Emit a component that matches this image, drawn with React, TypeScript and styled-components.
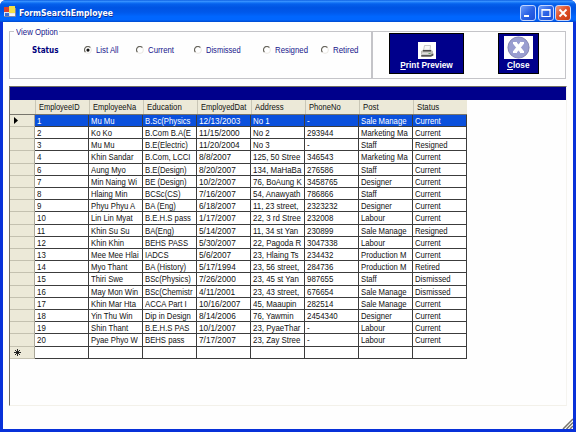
import React from "react";
import styled, { createGlobalStyle } from "styled-components";

const Global = createGlobalStyle`
  * { box-sizing: border-box; }
  body { margin: 0; background: #fff; overflow: hidden; font-family: "Liberation Sans", Arial, sans-serif; }
`;

const Window = styled.div`
  width: 576px;
  height: 432px;
  display: flex;
  flex-direction: column;
  background: #0831d9;
  border-radius: 6px 6px 0 0;
  overflow: hidden;
`;

const TitleBar = styled.header`
  height: 22px;
  flex: none;
  display: flex;
  align-items: center;
  padding: 2px 5px 0 4px;
  gap: 2px;
  background: linear-gradient(#0a5ce0 0, #3a93ff 6%, #2080fa 10%, #0560ec 18%, #0054e3 35%, #0058ea 55%, #0066fe 75%, #0066ff 90%, #0048cc 100%);
`;

const Title = styled.h1`
  margin: 0 auto 0 1px;
  font: bold 9.5px/14px "DejaVu Sans", sans-serif;
  color: #fff;
  white-space: nowrap;
  width: 380px;
  transform: scaleX(0.81);
  transform-origin: left;
  text-shadow: 1px 1px #0a2f9a;
  padding-top: 1px;
`;

const Caption = styled.span<{ $close?: boolean }>`
  width: 16px;
  height: 16px;
  flex: none;
  margin-top: 1px;
  margin-left: ${(p) => (p.$close ? "-1px" : 0)};
  border: 1px solid #c3d6ff;
  border-radius: 3px;
  background: ${(p) => (p.$close ? "linear-gradient(135deg,#f0997c,#e2522b 45%,#c63a12)" : "linear-gradient(135deg,#6d9dfa,#2c63e6 50%,#1c4fd8)")};
  display: flex;
  svg { display: block; }
`;

const Client = styled.main`
  flex: 1;
  margin: 0 3px 3px 3px;
  background: #fefefe;
  padding: 9px 7px 0 6px;
  display: flex;
  flex-direction: column;
  position: relative;
`;

const Tools = styled.section`
  display: flex;
  height: 48px;
`;

const Box = styled.div<{ $w: number }>`
  width: ${(p) => p.$w}px;
  border: 1px solid #c4c4c8;
  position: relative;
`;

const Legend = styled.span`
  position: absolute;
  top: -6px;
  left: 4px;
  width: 45px;
  padding-left: 2px;
  background: #fefefe;
  font-size: 9.4px;
  line-height: 12px;
  color: #16168c;
  white-space: nowrap;
`;

const Squeeze = styled.span<{ $k: number }>`
  display: inline-block;
  transform: scaleX(${(p) => p.$k * 0.957});
  transform-origin: left;
  white-space: pre;
`;

const StatusRow = styled.div`
  height: 14px;
  margin: 11px 0 0 22px;
  display: grid;
  grid-template-columns: 52px 52px 58px 69px 58px 50px;
  align-items: center;
  color: #16168c;
  font-size: 9.4px;
  line-height: 14px;
`;

const Status = styled.strong`
  font: bold 9px/14px "DejaVu Sans", sans-serif;
  color: #00007c;
`;

const Option = styled.label`
  display: flex;
  align-items: center;
  gap: 4px;
  white-space: nowrap;
  svg { flex: none; }
`;

const Actions = styled(Box)`
  display: flex;
  padding: 1px 0 0 16px;
  gap: 34px;
`;

const Action = styled.button<{ $w: number }>`
  width: ${(p) => p.$w}px;
  height: 41px;
  padding: 0;
  border: 1px solid #000;
  background: #00008b;
  color: #fff;
  display: flex;
  flex-direction: column;
  align-items: center;
  justify-content: flex-end;
  font: bold 9px/13px "Liberation Sans", Arial, sans-serif;
  white-space: nowrap;
`;

const ActionText = styled.span<{ $k: number }>`
  height: 13px;
  margin-bottom: 1px;
  transform: scaleX(${(p) => p.$k});
`;

const Grid = styled.section`
  margin-top: 7px;
  height: 320px;
  width: 558px;
  border-left: 1px solid #716f64;
  border-top: 1px solid #716f64;
  border-bottom: 1px solid #f3f1ea;
  border-right: 1px solid #f5f4f0;
`;

const Band = styled.div`
  height: 13px;
  background: #00008b;
`;

const Row = styled.div<{ $h: number }>`
  display: grid;
  grid-template-columns: 25px repeat(8, 54px);
  width: 457px;
  height: ${(p) => p.$h}px;
`;

const HeadRow = styled(Row)`
  background: #ece9d8;
  border-bottom: 1px solid #77756c;
`;

const Head = styled.div`
  border-left: 1px solid #c9c6b6;
  padding-left: 2.5px;
  font-size: 9.4px;
  line-height: 14px;
  color: #111;
  overflow: hidden;
`;

const Stub = styled.div`
  background: #ece9d8;
  border-bottom: 1px solid #c4c1b0;
  border-right: 1px solid #a9a698;
  display: flex;
  align-items: center;
  padding-left: 4px;
`;

const Cell = styled.div<{ $on?: boolean }>`
  border-right: 1px solid #3c3c3c;
  border-bottom: 1px solid #3c3c3c;
  padding-left: 2px;
  font-size: 9.4px;
  line-height: 11px;
  white-space: nowrap;
  background: ${(p) => (p.$on ? "#0a50dc" : "#fff")};
  color: ${(p) => (p.$on ? "#fff" : "#111")};
`;

const Grip = styled.svg`
  position: absolute;
  right: 0;
  bottom: 0;
`;

const heads = ["EmployeeID", "EmployeeNa", "Education", "EmployedDat", "Address", "PhoneNo", "Post", "Status"];
const headScale = [0.83, 0.84, 0.87, 0.84, 0.87, 0.85, 0.87, 0.87];

const rows = `1|Mu Mu|B.Sc(Physics|12/13/2003|No 1|-|Sale Manage|Current
2|Ko Ko|B.Com B.A(E|11/15/2000|No 2|293944|Marketing Ma|Current
3|Mu Mu|B.E(Electric)|11/20/2004|No 3|-|Staff|Resigned
4|Khin Sandar|B.Com, LCCI|8/8/2007|125, 50 Stree|346543|Marketing Ma|Current
6|Aung Myo|B.E(Design)|8/20/2007|134, MaHaBa|276586|Staff|Current
7|Min Naing Wi|BE (Design)|10/2/2007|76, BoAung K|3458765|Designer|Current
8|Hlaing Min|BCSc(CS)|7/16/2007|54, Anawyath|786866|Staff|Current
9|Phyu Phyu A|BA (Eng)|6/18/2007|11, 23 street,|2323232|Designer|Current
10|Lin Lin Myat|B.E.H.S pass|1/17/2007|22, 3 rd Stree|232008|Labour|Current
11|Khin Su Su|BA(Eng)|5/14/2007|11, 34 st Yan|230899|Sale Manage|Resigned
12|Khin Khin|BEHS PASS|5/30/2007|22, Pagoda R|3047338|Labour|Current
13|Mee Mee Hlai|IADCS|5/6/2007|23, Hlaing Ts|234432|Production M|Current
14|Myo Thant|BA (History)|5/17/1994|23, 56 street,|284736|Production M|Retired
15|Thiri Swe|BSc(Physics)|7/26/2000|23, 45 st Yan|987655|Staff|Dismissed
16|May Mon Win|BSc(Chemistr|4/11/2001|23, 43 street,|676654|Sale Manage|Dismissed
17|Khin Mar Hta|ACCA Part I|10/16/2007|45, Maaupin|282514|Sale Manage|Current
18|Yin Thu Win|Dip in Design|8/14/2006|76, Yawmin|2454340|Designer|Current
19|Shin Thant|B.E.H.S PAS|10/1/2007|23, PyaeThar|-|Labour|Current
20|Pyae Phyo W|BEHS pass|7/17/2007|23, Zay Stree|-|Labour|Current
|||||||`.split("\n").map((line) => line.split("|"));
const cellScale = [0.88, 0.86, 0.86, 0.92, 0.88, 0.88, 0.86, 0.86];

const Radio = ({ on }: { on?: boolean }) => (
  <svg width="8" height="8" viewBox="0 0 8 8">
    <circle cx="4" cy="4" r="3.4" fill="#fff" stroke="#e4e2da" strokeWidth=".8" />
    <path d="M1.4 6.2A3.4 3.4 0 0 1 6.4 1.5" fill="none" stroke="#68665e" strokeWidth="1.1" />
    {on && <circle cx="4" cy="4.1" r="1.6" fill="#111" />}
  </svg>
);

const AppIcon = () => (
  <svg width="12" height="12" viewBox="0 0 12 12">
    <rect x="0" y="1" width="11" height="9" fill="#dfe6f4" />
    <rect x="0" y="1" width="5" height="5" fill="#d9432f" />
    <rect x="5" y="0" width="6" height="7" fill="#f3df45" />
    <rect x="1" y="7" width="4" height="3" fill="#3c6fd8" />
    <rect x="6" y="8" width="5" height="2" fill="#f5f5f5" />
    <path d="M0 10.5H11.5V2" fill="none" stroke="#7a86a8" />
  </svg>
);

const PrinterIcon = () => (
  <svg width="18" height="17" viewBox="0 0 18 17">
    <rect width="18" height="17" fill="#fff" />
    <path d="M5.5 8.5 6.5 3.5H12.5L12 8.5Z" fill="#f7f7f7" stroke="#b2b2b2" strokeWidth=".7" />
    <path d="M3 9.2 5 7.8H13.2L15 9.2V12.2H3Z" fill="#bcbcb6" />
    <path d="M5 8.8H13" stroke="#333" strokeWidth="1.2" />
    <path d="M3.2 12.7H12.5L15.4 11.4V13.5L13 14.7H3.2Z" fill="#555" />
    <path d="M4 11.2H12" stroke="#eee" />
    <path d="M10.5 11.5H12.5" stroke="#6aa76a" />
  </svg>
);

const CloseIcon = () => (
  <svg width="29" height="23" viewBox="0 0 29 23">
    <rect width="29" height="23" fill="#fff" />
    <circle cx="14.5" cy="11.5" r="10.6" fill="#9a9ed0" stroke="#7779a8" strokeWidth=".8" />
    <path d="M10.8 7 18.2 16M18.2 7 10.8 16" stroke="#fff" strokeWidth="3.6" />
    <path d="M9 7H13M16 7H20M9 16H13M16 16H20" stroke="#fff" strokeWidth="2" />
  </svg>
);

const options: [string, number][] = [["List All", 0.87], ["Current", 0.87], ["Dismissed", 0.84], ["Resigned", 0.87], ["Retired", 0.88]];

export default function App() {
  return (
    <>
      <Global />
      <Window>
        <TitleBar>
          <AppIcon />
          <Title>FormSearchEmployee</Title>
          <Caption><svg width="14" height="14"><path d="M3 10H8" stroke="#fff" strokeWidth="2" /></svg></Caption>
          <Caption><svg width="14" height="14"><path d="M3 3.5H11V10.5H3ZM3 4.2H11" fill="none" stroke="#fff" strokeWidth="1.2" /></svg></Caption>
          <Caption $close><svg width="14" height="14"><path d="M3.5 3.5 10.5 10.5M10.5 3.5 3.5 10.5" stroke="#fff" strokeWidth="1.8" /></svg></Caption>
        </TitleBar>
        <Client>
          <Tools>
            <Box $w={363}>
              <Legend><Squeeze $k={0.87}>View Option</Squeeze></Legend>
              <StatusRow>
                <Status><Squeeze $k={0.84}>Status</Squeeze></Status>
                {options.map(([name, k], i) => (
                  <Option key={name}>
                    <Radio on={i === 0} />
                    <Squeeze $k={k}>{name}</Squeeze>
                  </Option>
                ))}
              </StatusRow>
            </Box>
            <Actions $w={195}>
              <Action $w={75}>
                <PrinterIcon />
                <ActionText $k={0.92}><u>P</u>rint Preview</ActionText>
              </Action>
              <Action $w={41}>
                <CloseIcon />
                <ActionText $k={0.92}><u>C</u>lose</ActionText>
              </Action>
            </Actions>
          </Tools>
          <Grid>
            <Band />
            <HeadRow $h={15}>
              <div />
              {heads.map((h, i) => <Head key={h}><Squeeze $k={headScale[i]}>{h}</Squeeze></Head>)}
            </HeadRow>
            {rows.map((r, n) => (
              <Row key={n} $h={n % 5 === 3 ? 13 : 12}>
                <Stub>
                  {n === 0 && <svg width="5" height="7"><path d="M0 0 4 3.5 0 7Z" fill="#000" /></svg>}
                  {n === 19 && <svg width="7" height="7"><path d="M3.5 0V7M0 3.5H7M1 1 6 6M6 1 1 6" stroke="#111" strokeWidth=".9" /></svg>}
                </Stub>
                {r.map((t, i) => (
                  <Cell key={i} $on={n === 0}><Squeeze $k={cellScale[i]}>{t}</Squeeze></Cell>
                ))}
              </Row>
            ))}
          </Grid>
          <Grip width="11" height="11"><path d="M1 11 11 1M4.5 11 11 4.5M8 11 11 8" stroke="#77756c" strokeWidth="1.5" /></Grip>
        </Client>
      </Window>
    </>
  );
}
